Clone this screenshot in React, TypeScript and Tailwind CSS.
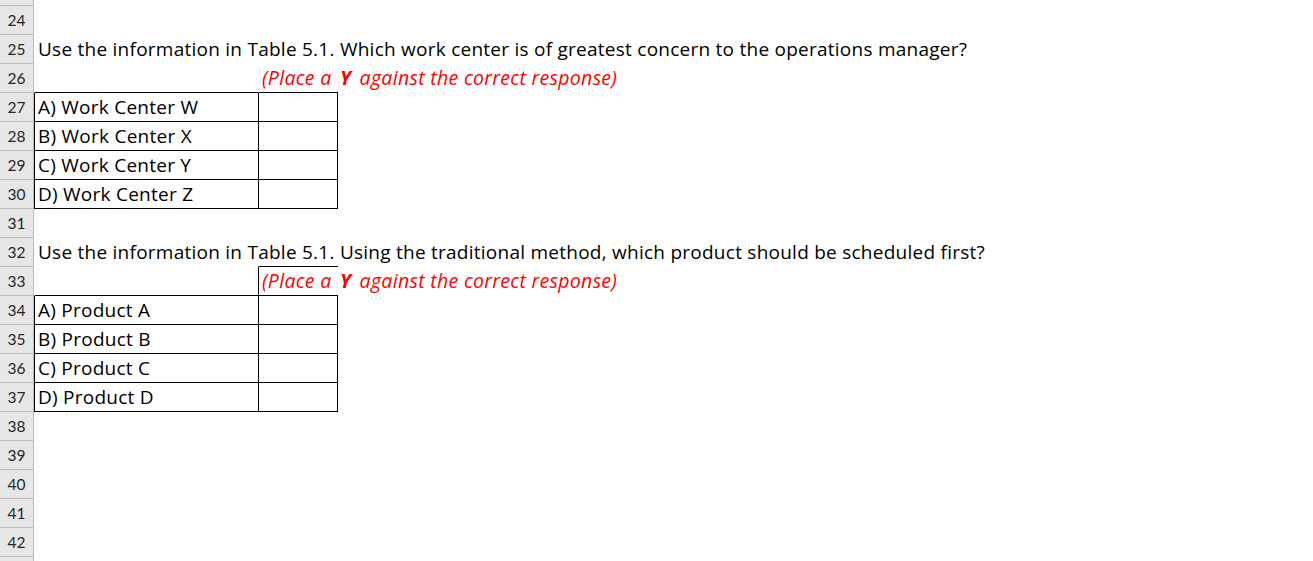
import React from 'react'

type Row = {
  n: number
  a?: React.ReactNode
  b?: React.ReactNode
  aCls?: string
  bCls?: string
  hideNum?: boolean
}

const cellFont = { fontFamily: '"Open Sans", "Noto Sans", sans-serif' }
const headFont = { fontFamily: 'Lato, "Open Sans", sans-serif' }

const Note = () => (
  <span className="italic text-[19.5px] tracking-[0.3px] text-[#ff0000]">
    (Place a<span className="mx-[3px] font-bold"> Y </span>against the correct response)
  </span>
)

const boxA = 'border-l border-b border-black'
const boxB = 'border-l border-r border-b border-black'
const topA = 'border-l border-b border-l-transparent border-b-black'

const rows: Row[] = [
  { n: 24 },
  {
    n: 25,
    a: 'Use the information in Table 5.1. Which work center is of greatest concern to the operations manager?',
  },
  { n: 26, b: <Note />, aCls: topA, bCls: topA },
  { n: 27, a: 'A) Work Center W', aCls: boxA, bCls: boxB },
  { n: 28, a: 'B) Work Center X', aCls: boxA, bCls: boxB },
  { n: 29, a: 'C) Work Center Y', aCls: boxA, bCls: boxB },
  { n: 30, a: 'D) Work Center Z', aCls: boxA, bCls: boxB },
  { n: 31 },
  {
    n: 32,
    a: 'Use the information in Table 5.1. Using the traditional method, which product should be scheduled first?',
    bCls: topA,
  },
  { n: 33, b: <Note />, aCls: topA, bCls: boxA },
  { n: 34, a: 'A) Product A', aCls: boxA, bCls: boxB },
  { n: 35, a: 'B) Product B', aCls: boxA, bCls: boxB },
  { n: 36, a: 'C) Product C', aCls: boxA, bCls: boxB },
  { n: 37, a: 'D) Product D', aCls: boxA, bCls: boxB },
  { n: 38 },
  { n: 39 },
  { n: 40 },
  { n: 41 },
  { n: 42 },
  { n: 43, hideNum: true },
]

function SheetRow({ row }: { row: Row }) {
  return (
    <div className="flex h-[29px]" style={cellFont}>
      <div
        className="w-[34px] shrink-0 bg-[#e6e6e6] border-r border-b border-[#bcbcbc] text-center text-[15.5px] leading-[28px] text-[#262626]"
        style={headFont}
      >
        {row.hideNum ? null : row.n}
      </div>
      <div
        className={`w-[224px] shrink-0 pl-[3px] whitespace-nowrap text-[19px] tracking-[0.25px] leading-[28px] text-black ${
          row.aCls ?? 'border-l border-transparent'
        }`}
      >
        {row.a}
      </div>
      <div
        className={`w-[80px] shrink-0 pl-[3px] whitespace-nowrap text-[19px] leading-[28px] ${
          row.bCls ?? 'border-l border-transparent'
        }`}
      >
        {row.b}
      </div>
    </div>
  )
}

export default function App() {
  return (
    <div className="h-[561px] w-[1313px] overflow-hidden bg-white">
      <div className="flex h-[6px]">
        <div className="w-[34px] bg-[#e6e6e6] border-r border-b border-[#bcbcbc]" />
      </div>
      {rows.map(row => (
        <SheetRow key={row.n} row={row} />
      ))}
    </div>
  )
}
